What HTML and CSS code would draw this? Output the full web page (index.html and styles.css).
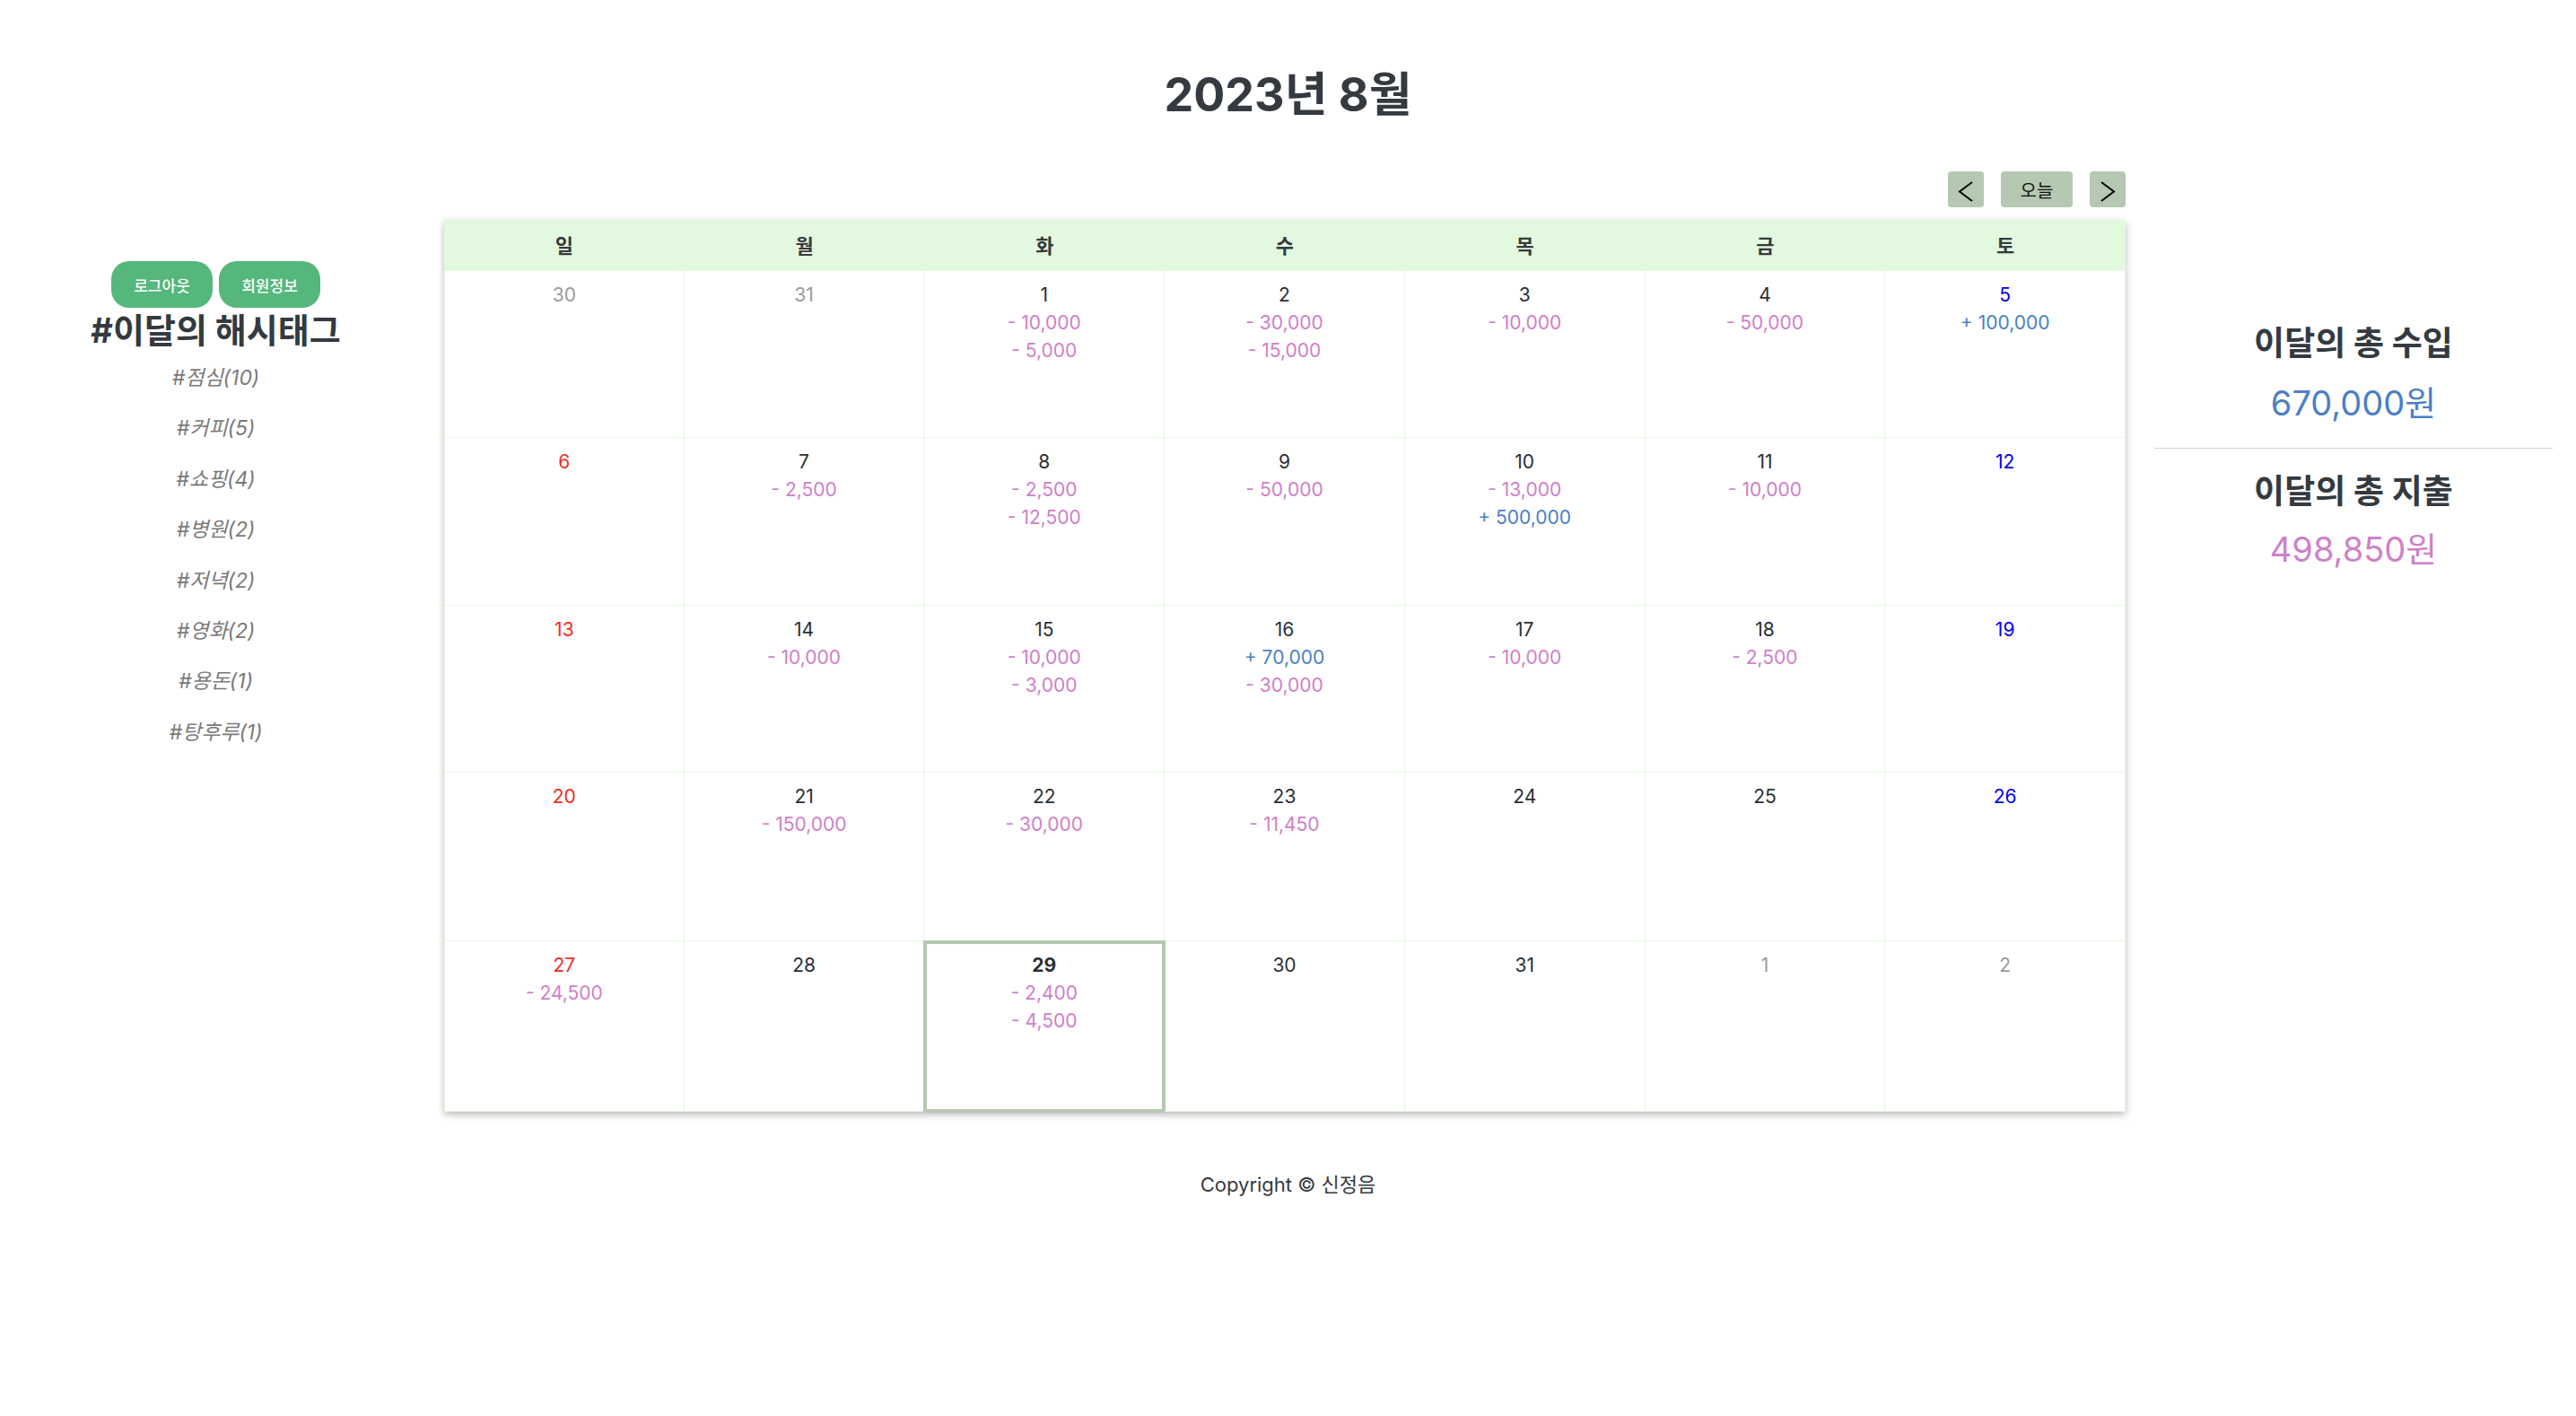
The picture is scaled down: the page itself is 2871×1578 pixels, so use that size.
FILE: index.html
```html
<!DOCTYPE html>
<html lang="ko">
<head>
<meta charset="utf-8">
<title>가계부 캘린더</title>
<link rel="stylesheet" href="styles.css">
</head>
<body>
<h1 class="title">2023년 8월</h1>
<div class="main">
  <aside class="sidebar">
    <div class="auth">
      <button class="pill">로그아웃</button>
      <button class="pill">회원정보</button>
    </div>
    <h2 class="tag-title">#이달의 해시태그</h2>
    <ul class="tags">
      <li>#점심(10)</li>
      <li>#커피(5)</li>
      <li>#쇼핑(4)</li>
      <li>#병원(2)</li>
      <li>#저녁(2)</li>
      <li>#영화(2)</li>
      <li>#용돈(1)</li>
      <li>#탕후루(1)</li>
    </ul>
  </aside>

  <section class="cal-wrap">
    <div class="nav">
      <button class="nav-btn" aria-label="이전 달"><svg width="40" height="40" viewBox="0 0 40 40"><polyline points="27,12 13,22.5 27,33" fill="none" stroke="#000" stroke-width="2"/></svg></button>
      <button class="nav-btn today-btn">오늘</button>
      <button class="nav-btn" aria-label="다음 달"><svg width="40" height="40" viewBox="0 0 40 40"><polyline points="13,12 27,22.5 13,33" fill="none" stroke="#000" stroke-width="2"/></svg></button>
    </div>
    <div class="calendar">
      <div class="dow">일</div><div class="dow">월</div><div class="dow">화</div><div class="dow">수</div><div class="dow">목</div><div class="dow">금</div><div class="dow">토</div>

      <div class="cell"><span class="date other">30</span></div>
      <div class="cell"><span class="date other">31</span></div>
      <div class="cell"><span class="date">1</span><span class="out">- 10,000</span><span class="out">- 5,000</span></div>
      <div class="cell"><span class="date">2</span><span class="out">- 30,000</span><span class="out">- 15,000</span></div>
      <div class="cell"><span class="date">3</span><span class="out">- 10,000</span></div>
      <div class="cell"><span class="date">4</span><span class="out">- 50,000</span></div>
      <div class="cell"><span class="date sat">5</span><span class="in">+ 100,000</span></div>

      <div class="cell"><span class="date sun">6</span></div>
      <div class="cell"><span class="date">7</span><span class="out">- 2,500</span></div>
      <div class="cell"><span class="date">8</span><span class="out">- 2,500</span><span class="out">- 12,500</span></div>
      <div class="cell"><span class="date">9</span><span class="out">- 50,000</span></div>
      <div class="cell"><span class="date">10</span><span class="out">- 13,000</span><span class="in">+ 500,000</span></div>
      <div class="cell"><span class="date">11</span><span class="out">- 10,000</span></div>
      <div class="cell"><span class="date sat">12</span></div>

      <div class="cell"><span class="date sun">13</span></div>
      <div class="cell"><span class="date">14</span><span class="out">- 10,000</span></div>
      <div class="cell"><span class="date">15</span><span class="out">- 10,000</span><span class="out">- 3,000</span></div>
      <div class="cell"><span class="date">16</span><span class="in">+ 70,000</span><span class="out">- 30,000</span></div>
      <div class="cell"><span class="date">17</span><span class="out">- 10,000</span></div>
      <div class="cell"><span class="date">18</span><span class="out">- 2,500</span></div>
      <div class="cell"><span class="date sat">19</span></div>

      <div class="cell"><span class="date sun">20</span></div>
      <div class="cell"><span class="date">21</span><span class="out">- 150,000</span></div>
      <div class="cell"><span class="date">22</span><span class="out">- 30,000</span></div>
      <div class="cell"><span class="date">23</span><span class="out">- 11,450</span></div>
      <div class="cell"><span class="date">24</span></div>
      <div class="cell"><span class="date">25</span></div>
      <div class="cell"><span class="date sat">26</span></div>

      <div class="cell"><span class="date sun">27</span><span class="out">- 24,500</span></div>
      <div class="cell"><span class="date">28</span></div>
      <div class="cell today"><span class="date strong">29</span><span class="out">- 2,400</span><span class="out">- 4,500</span></div>
      <div class="cell"><span class="date">30</span></div>
      <div class="cell"><span class="date">31</span></div>
      <div class="cell"><span class="date other">1</span></div>
      <div class="cell"><span class="date other">2</span></div>
    </div>
  </section>

  <aside class="summary">
    <h3 class="sum-title">이달의 총 수입</h3>
    <p class="sum-amount income">670,000원</p>
    <hr class="sum-line">
    <h3 class="sum-title">이달의 총 지출</h3>
    <p class="sum-amount expense">498,850원</p>
  </aside>
</div>
<footer class="footer">Copyright © 신정음</footer>
</body>
</html>
```

FILE: styles.css
```css
* { box-sizing: border-box; }

body {
  margin: 0;
  background: #fff;
  color: #343a40;
  font-family: Inter, "Noto Sans CJK KR", sans-serif;
}

.title {
  margin: 75px 0 0;
  text-align: center;
  font-size: 52px;
  line-height: 62px;
  font-weight: 700;
  color: #343a40;
}

.main {
  display: flex;
  align-items: flex-start;
  margin-top: 54px;
}

/* ---------- sidebar ---------- */
.sidebar {
  width: 481px;
  flex: none;
  margin-top: 100px;
  text-align: center;
}

.auth {
  display: flex;
  justify-content: center;
  gap: 7px;
}

.pill {
  width: 113px;
  height: 52px;
  border: none;
  border-radius: 20px;
  background: #55b77c;
  color: #fff;
  font-family: Inter, "Noto Sans CJK KR", sans-serif;
  font-size: 17px;
  font-weight: 500;
  padding: 0;
}

.tag-title {
  margin: 3px 0 0;
  font-size: 38px;
  line-height: 44px;
  font-weight: 700;
  color: #343a40;
}

.tags {
  list-style: none;
  margin: 3px 0 0;
  padding: 0;
}

.tags li {
  line-height: 56.4px;
  font-size: 23px;
  font-style: italic;
  color: #7a7a7a;
}

/* ---------- calendar ---------- */
.cal-wrap {
  width: 1874px;
  flex: none;
  margin-left: 14px;
}

.nav {
  display: flex;
  justify-content: flex-end;
  gap: 19px;
  height: 40px;
  margin-bottom: 14px;
}

.nav-btn {
  width: 40px;
  height: 40px;
  padding: 0;
  border: none;
  border-radius: 4px;
  background: #b5c8b1;
  display: flex;
  align-items: center;
  justify-content: center;
  color: #111;
  font-family: Inter, "Noto Sans CJK KR", sans-serif;
}

.today-btn {
  width: 80px;
  font-size: 20px;
}

.calendar {
  display: grid;
  grid-template-columns: repeat(7, 1fr);
  grid-template-rows: 57px 186px 187px 186px 188px 190px;
  box-shadow: 0 3px 8px rgba(0, 0, 0, 0.28);
  background: #fff;
}

.dow {
  background: #e3f9df;
  display: flex;
  align-items: center;
  justify-content: center;
  padding-bottom: 4px;
  font-size: 22px;
  font-weight: 700;
  color: #343a40;
}

.cell {
  display: flex;
  flex-direction: column;
  align-items: center;
  padding-top: 11px;
  border-right: 1px solid #e6f8e2;
  border-bottom: 1px solid #e6f8e2;
  font-size: 21px;
  line-height: 31px;
}

.cell:nth-child(7n+1) { border-left: 1px solid #e6f8e2; }

.date { color: #2b2f33; }
.date.other { color: #9a9a9a; }
.date.sun { color: #ee2d1f; }
.date.sat { color: #0000f0; }
.date.strong { font-weight: 700; }

.out { color: #cf80c8; }
.in { color: #4b7fc6; }

.today {
  outline: 4px solid #b5c8b1;
  outline-offset: -3px;
}

/* ---------- summary ---------- */
.summary {
  width: 444px;
  flex: none;
  margin-left: 32px;
  margin-top: 169px;
  text-align: center;
}

.sum-title {
  margin: 0;
  font-size: 37px;
  line-height: 46px;
  font-weight: 700;
  color: #343a40;
}

.sum-amount {
  margin: 18px 0 0;
  font-size: 38px;
  line-height: 50px;
}

.income { color: #4b7fc6; }
.expense { color: #cf80c8; }

.sum-line {
  margin: 25px 0 25px;
  border: none;
  border-top: 1px solid #cfcfcf;
}

.summary .sum-line + .sum-title + .sum-amount { margin-top: 16px; }

/* ---------- footer ---------- */
.footer {
  margin-top: 66px;
  text-align: center;
  font-size: 22px;
  line-height: 30px;
  color: #343a40;
}
```
